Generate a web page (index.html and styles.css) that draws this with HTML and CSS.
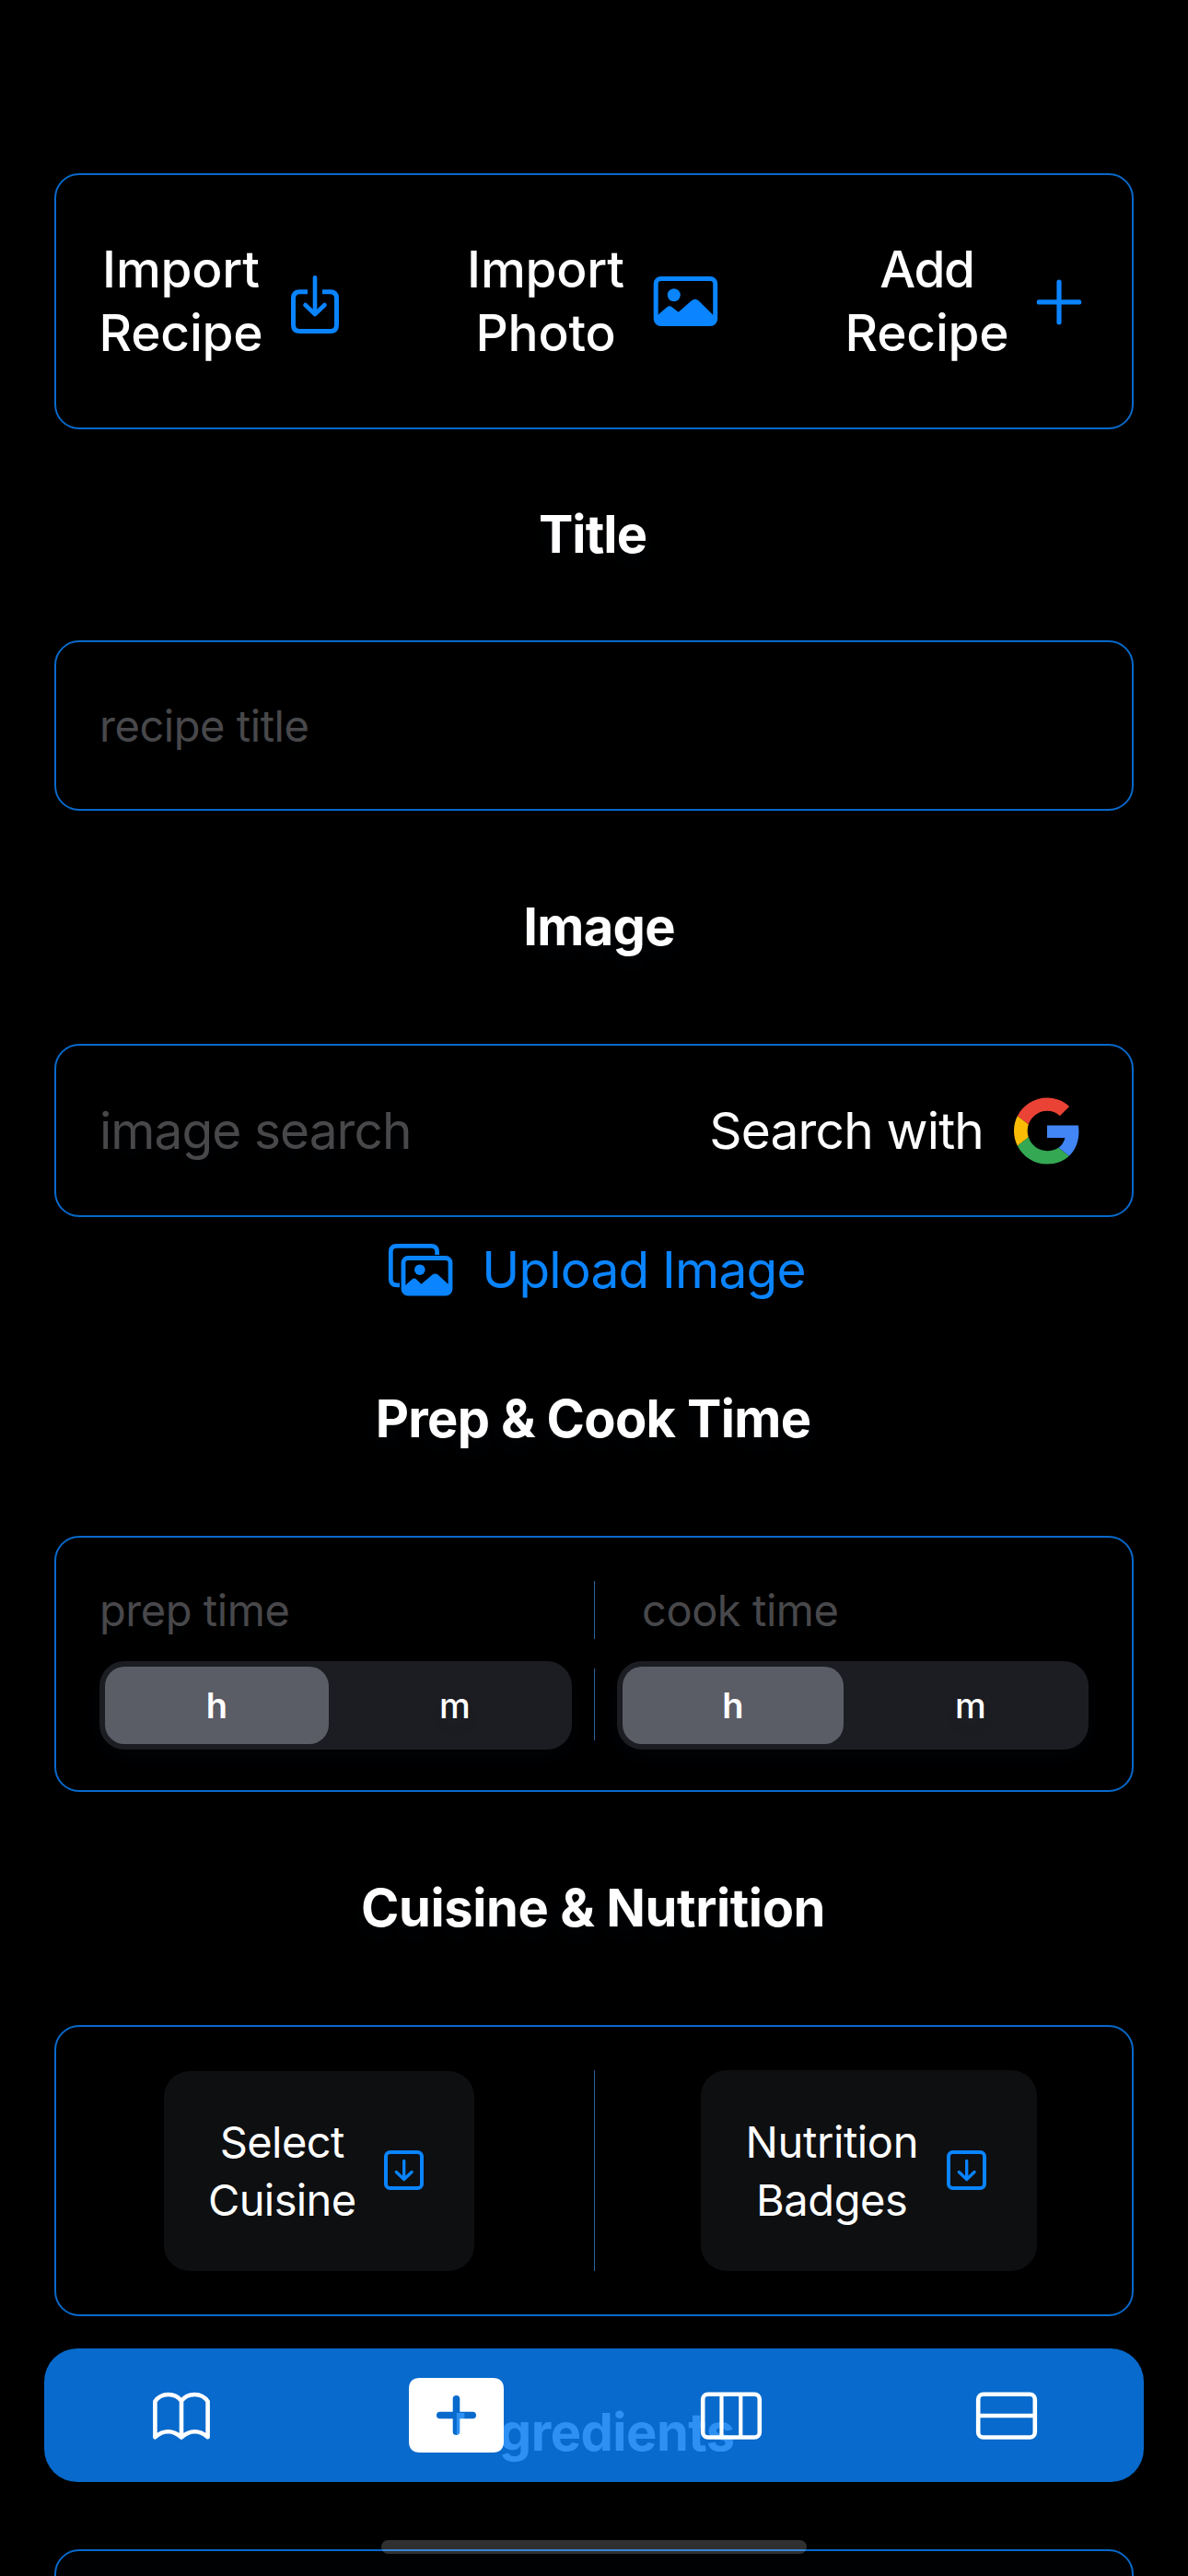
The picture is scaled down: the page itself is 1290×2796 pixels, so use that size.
FILE: index.html
```html
<!DOCTYPE html>
<html lang="en">
<head>
<meta charset="utf-8">
<title>Add Recipe</title>
<link rel="stylesheet" href="styles.css">
</head>
<body>
<div class="screen">
  <main class="form">
    <section class="card actions">
      <button class="action">
        <span class="action-label label-recipe"><span>Import</span><span>Recipe</span></span>
        <svg width="56" height="80" viewBox="0 0 56 80" fill="none" stroke="currentColor" stroke-width="5">
          <path d="M20 29.8H11.5Q4.5 29.8 4.5 36.8V65.5Q4.5 72.5 11.5 72.5H44.5Q51.500 72.500 51.500 65.500V36.800Q51.500 29.800 44.500 29.800H36"/>
          <path d="M28 14.400V53" stroke-width="4.600" stroke-linecap="round"/>
          <path d="M17.500 44L28 54L38.500 44" stroke-width="4.600" stroke-linecap="round" stroke-linejoin="round"/>
        </svg>
      </button>
      <button class="action action-photo">
        <span class="action-label label-photo"><span>Import</span><span>Photo</span></span>
        <svg width="72" height="80" viewBox="0 0 72 80">
          <rect x="4.200" y="15.500" width="64.500" height="49" rx="5.500" fill="none" stroke="currentColor" stroke-width="5"/>
          <circle cx="23.800" cy="33.300" r="7" fill="currentColor"/>
          <path d="M5 56L16 46.500Q19 43.800 22 46.500L28.700 51.800L43 39.300Q46.700 36.300 50.500 39.300L68 56.500V61Q68 65 64 65H9Q5 65 5 61Z" fill="currentColor"/>
        </svg>
      </button>
      <button class="action action-add">
        <span class="action-label label-recipe"><span class="tight">Add</span><span>Recipe</span></span>
        <svg width="56" height="80" viewBox="0 0 56 80" stroke="currentColor" stroke-width="5.200" stroke-linecap="round">
          <path d="M28 19V62.700M6.300 40.900H49.700"/>
        </svg>
      </button>
    </section>

    <h2 class="heading heading-title">Title</h2>
    <section class="card title-field">
      <span class="placeholder">recipe title</span>
    </section>

    <h2 class="heading heading-image">Image</h2>
    <section class="card image-field">
      <span class="placeholder placeholder-large">image search</span>
      <button class="google">
        <span>Search with</span>
        <svg width="72" height="73" viewBox="0 0 48 48">
          <path fill="#ea4335" d="M24 9.500c3.540 0 6.710 1.220 9.210 3.600l6.850-6.850C35.900 2.380 30.470 0 24 0 14.620 0 6.510 5.380 2.560 13.220l7.980 6.190C12.430 13.720 17.740 9.500 24 9.500z"/>
          <path fill="#4285f4" d="M46.980 24.550c0-1.570-.15-3.090-.38-4.550H24v9.020h12.940c-.58 2.960-2.260 5.480-4.780 7.180l7.730 6c4.510-4.180 7.090-10.360 7.090-17.650z"/>
          <path fill="#fbbc05" d="M10.530 28.590c-.48-1.450-.76-2.990-.76-4.590s.27-3.140.76-4.590l-7.980-6.190C.92 16.460 0 20.120 0 24c0 3.880.92 7.540 2.560 10.780l7.970-6.190z"/>
          <path fill="#34a853" d="M24 48c6.480 0 11.930-2.130 15.890-5.810l-7.730-6c-2.150 1.450-4.920 2.300-8.160 2.300-6.260 0-11.570-4.220-13.470-9.910l-7.980 6.190C6.510 42.620 14.620 48 24 48z"/>
        </svg>
      </button>
    </section>
    <button class="upload">
      <svg width="72" height="60" viewBox="0 0 72 60">
        <path d="M14 46.800H11Q4.300 46.800 4.300 40.500V10.700Q4.300 4.300 11 4.300H48Q54.600 4.300 54.600 10.700V14" fill="none" stroke="currentColor" stroke-width="4.800"/>
        <rect x="18" y="17.500" width="51" height="38.500" rx="5" fill="none" stroke="currentColor" stroke-width="4.800"/>
        <circle cx="35.800" cy="30.200" r="5.800" fill="currentColor"/>
        <path d="M18 49L27.500 40.500Q29.800 38.600 32 40.500L37.500 45.800L49.500 35.600Q52.500 33.300 55.500 35.600L69 48V52Q69 56 65 56H22Q18 56 18 52Z" fill="currentColor"/>
      </svg>
      <span>Upload Image</span>
    </button>

    <h2 class="heading heading-after">Prep &amp; Cook Time</h2>
    <section class="card times">
      <div class="time-row time-names">
        <span class="placeholder">prep time</span>
        <i class="rule"></i>
        <span class="placeholder cook">cook time</span>
      </div>
      <div class="time-row time-units">
        <div class="segmented"><b class="on">h</b><span>m</span></div>
        <i class="rule"></i>
        <div class="segmented second"><b class="on">h</b><span>m</span></div>
      </div>
    </section>

    <h2 class="heading heading-cuisine">Cuisine &amp; Nutrition</h2>
    <section class="card selects">
      <button class="select cuisine">
        <span class="select-label"><span>Select</span><span>Cuisine</span></span>
        <svg width="48" height="48" viewBox="0 0 48 48" fill="none" stroke="currentColor">
          <rect x="4" y="4" width="39" height="39" rx="4.500" stroke-width="4"/>
          <path d="M23.700 13.500V32.500M15.300 25.500L23.700 33.500L32.100 25.500" stroke-width="3.300" stroke-linecap="round" stroke-linejoin="round"/>
        </svg>
      </button>
      <i class="rule"></i>
      <button class="select badges">
        <span class="select-label"><span>Nutrition</span><span>Badges</span></span>
        <svg width="48" height="48" viewBox="0 0 48 48" fill="none" stroke="currentColor">
          <rect x="4" y="4" width="39" height="39" rx="4.500" stroke-width="4"/>
          <path d="M23.700 13.500V32.500M15.300 25.500L23.700 33.500L32.100 25.500" stroke-width="3.300" stroke-linecap="round" stroke-linejoin="round"/>
        </svg>
      </button>
    </section>

    <h2 class="heading">Ingredients</h2>
    <section class="card ingredients"></section>
  </main>

  <nav class="tabs">
    <svg width="64" height="54" viewBox="0 0 64 54" fill="none" stroke="currentColor" stroke-width="4.600" stroke-linecap="round" stroke-linejoin="round">
      <path d="M32 50.500Q25 44.300 17.600 44.300Q10.500 44.300 3.400 50.200V11.500Q8.500 4 17.600 4Q27 4 32 11Q37 4 46.400 4Q55.500 4 60.600 11.500V50.200Q53.500 44.300 46.400 44.300Q39 44.300 32 50.500ZM32 11V50.500"/>
    </svg>
    <svg width="103" height="81" viewBox="0 0.500 103 81">
      <path fill="currentColor" fill-rule="evenodd" d="M12 0.500H91Q103 0.500 103 12.500V69.500Q103 81.500 91 81.500H12Q0 81.500 0 69.500V12.500Q0 0.500 12 0.500ZM51.500 19.500Q47.700 19.500 47.700 23.300V37.200H33.800Q30 37.200 30 41Q30 44.800 33.800 44.800H47.700V58.700Q47.700 62.500 51.500 62.500Q55.300 62.500 55.300 58.700V44.800H69.200Q73 44.800 73 41Q73 37.200 69.200 37.200H55.300V23.300Q55.300 19.500 51.500 19.500Z"/>
    </svg>
    <svg width="68" height="54" viewBox="0 0 68 54" fill="none" stroke="currentColor" stroke-width="4.600">
      <rect x="3.200" y="3.700" width="61.600" height="46.800" rx="5.500"/>
      <path d="M23.500 4V50M44.300 4V50" stroke-width="4.200"/>
    </svg>
    <svg width="68" height="54" viewBox="0 0 68 54" fill="none" stroke="currentColor" stroke-width="4.600">
      <rect x="3.200" y="3.700" width="61.600" height="46.800" rx="5.500"/>
      <path d="M4 27H64"/>
    </svg>
  </nav>
  <div class="home-indicator"></div>
</div>
</body>
</html>
```
FILE: styles.css
```css
* {
  box-sizing: border-box;
}

body {
  margin: 0;
  background: #000;
}

button {
  margin: 0;
  padding: 0;
  border: 0;
  background: none;
  font: inherit;
  color: inherit;
}

svg {
  display: block;
  flex: none;
}

.screen {
  position: relative;
  width: 1290px;
  height: 2796px;
  overflow: hidden;
  background: #000;
  color: #fff;
  font-family: Inter, "Liberation Sans", sans-serif;
  font-size: 55px;
  line-height: 68px;
  text-shadow: 0 10px 30px rgba(10, 132, 255, 0.05);
}

.form {
  display: flex;
  flex-direction: column;
  padding: 188px 59px 0;
}

.card {
  flex: none;
  border: 2px solid #0869cb;
  border-radius: 27px;
}

.heading {
  flex: none;
  margin: 92px 0 93px;
  font-size: 56px;
  font-weight: 700;
  line-height: 68px;
  letter-spacing: -0.5px;
  text-align: center;
}

.heading-title {
  margin: 80px 0 81px;
  padding-right: 3px;
  letter-spacing: -0.9px;
}

.heading-image {
  padding-left: 11px;
  letter-spacing: -0.7px;
}

.heading-after {
  margin-top: 94px;
  padding-right: 2px;
  letter-spacing: -0.67px;
}

.heading-cuisine {
  padding-right: 2px;
  letter-spacing: -0.4px;
}

.placeholder {
  color: #48484b;
  font-size: 47px;
  line-height: 63px;
  letter-spacing: -0.45px;
}

.placeholder-large {
  font-size: 55px;
  line-height: 68px;
  letter-spacing: -0.95px;
}

.actions {
  display: flex;
  align-items: center;
  justify-content: space-between;
  height: 278px;
  padding: 0 51px 0 47px;
}

.action {
  display: flex;
  align-items: center;
  gap: 26px;
  color: #0a84ff;
}

.action-photo {
  gap: 28px;
}

.action-add {
  gap: 24px;
}

.action-label {
  display: flex;
  flex-direction: column;
  align-items: center;
  padding-right: 3px;
  color: #fff;
  font-weight: 500;
  line-height: 69px;
  letter-spacing: -0.2px;
}

.action-label .tight {
  letter-spacing: -1.4px;
}

.label-recipe {
  width: 180px;
}

.label-photo {
  width: 172px;
}

.title-field {
  display: flex;
  align-items: center;
  height: 185px;
  padding: 0 47px;
}

.image-field {
  display: flex;
  align-items: center;
  justify-content: space-between;
  height: 188px;
  padding: 0 56px 0 47px;
}

.google {
  display: flex;
  align-items: center;
  gap: 33px;
  letter-spacing: -0.83px;
}

.upload {
  display: flex;
  align-items: center;
  justify-content: center;
  gap: 31px;
  height: 68px;
  margin-top: 23px;
  padding-left: 5px;
  color: #0a84ff;
  letter-spacing: -0.8px;
  text-shadow: none;
}

.times {
  display: flex;
  flex-direction: column;
  gap: 24px;
  height: 278px;
  padding: 47px 47px 0;
}

.time-row {
  display: grid;
  grid-template-columns: 513px 1px 512px;
  gap: 24px;
  align-items: center;
}

.time-names {
  height: 63px;
}

.time-units {
  height: 96px;
}

.cook {
  padding-left: 27px;
}

.rule {
  align-self: stretch;
  background: #2b619b;
}

.time-units .rule {
  margin: 8px 0 10px;
}

.segmented {
  display: flex;
  height: 96px;
  padding: 6px;
  border-radius: 27px;
  background: #1c1d22;
  box-shadow: 0 8px 24px rgba(10, 132, 255, 0.03);
  font-size: 38px;
  line-height: 84px;
  text-align: center;
}

.segmented .on {
  width: 243px;
  border-radius: 21px;
  background: #5b5d66;
  font-weight: 600;
}

.segmented.second .on {
  width: 240px;
}

.segmented span {
  flex: 1;
  padding-left: 16px;
  font-weight: 500;
}

.selects {
  display: grid;
  grid-template-columns: 1fr 1px 1fr;
  gap: 12px;
  justify-items: center;
  height: 316px;
  padding: 47px 0;
}

.selects .rule {
  width: 1px;
}

.select {
  display: flex;
  align-items: center;
  height: 217px;
  margin-top: 1px;
  padding: 0 52px 0 48px;
  border-radius: 28px;
  background: #0e0f11;
  color: #0a84ff;
}

.badges {
  height: 218px;
  margin-top: 0;
}

.select-label {
  display: flex;
  flex-direction: column;
  align-items: center;
  color: #fff;
  font-size: 47px;
  line-height: 63px;
  letter-spacing: -0.6px;
}

.cuisine {
  gap: 29px;
  padding-bottom: 1px;
}

.badges {
  gap: 28px;
}

.cuisine .select-label {
  width: 160px;
}

.badges .select-label {
  width: 189px;
  letter-spacing: -0.4px;
}

.ingredients {
  height: 240px;
  background: #010203;
}

.tabs {
  position: absolute;
  left: 48px;
  top: 2549px;
  display: grid;
  grid-template-columns: repeat(4, 1fr);
  align-items: center;
  justify-items: center;
  width: 1194px;
  height: 145px;
  border-radius: 36px;
  background: rgba(9, 125, 240, 0.85);
}

.home-indicator {
  position: absolute;
  left: 414px;
  top: 2757px;
  width: 462px;
  height: 15px;
  border-radius: 8px;
  background: rgba(255, 255, 255, 0.19);
}
```
